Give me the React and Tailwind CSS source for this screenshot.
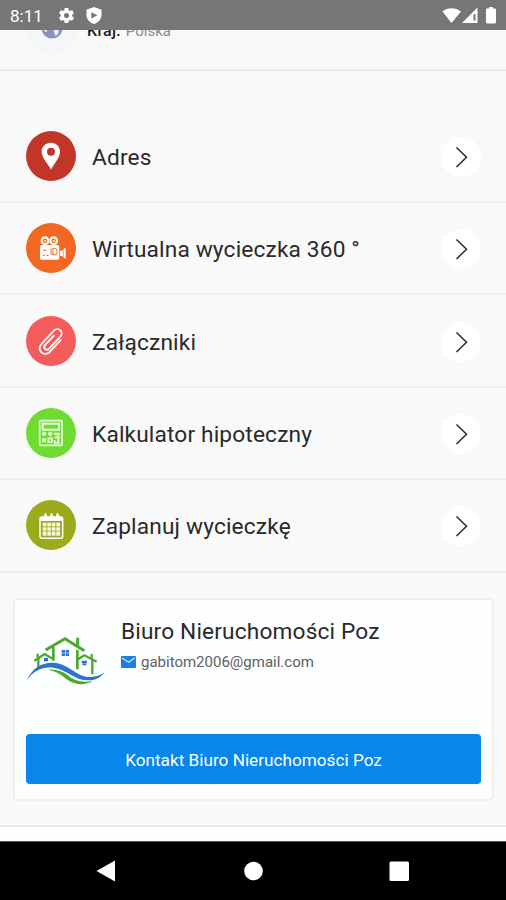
import React from 'react';

// --- ICONS ---
const PinIcon = () => (
  <svg viewBox="0 0 150 150" className="w-full h-full">
    <path fill="#fff" fillRule="evenodd" d="M75 35C58 35 47 47 47 62C47 80 64 94 75 116C86 94 102 80 102 62C102 47 91 35 75 35ZM75 50A12 12 0 1 1 75 74A12 12 0 1 1 75 50Z" />
  </svg>
);

const CameraIcon = () => (
  <svg viewBox="0 0 150 150" className="w-full h-full" fill="none" stroke="#fff">
    <circle cx="57" cy="53" r="10" strokeWidth="6.5" />
    <circle cx="83" cy="53" r="10" strokeWidth="6.5" />
    <circle cx="57" cy="53" r="3" fill="#fff" stroke="none" />
    <circle cx="83" cy="53" r="3" fill="#fff" stroke="none" />
    <rect x="42" y="66" width="58" height="44" rx="5" fill="#fff" stroke="none" />
    <path d="M100 83L109 83L119 73V108L109 99H100Z" fill="#fff" stroke="none" />
    <g stroke="#f26722" strokeWidth="3">
      <rect x="75" y="77" width="18" height="18" rx="4" />
      <path d="M81 80V93M51 82H62M50 97H57M61 97H68" />
      <path d="M101 80V100M112 82V100" strokeWidth="2" />
    </g>
  </svg>
);

const ClipIcon = () => (
  <svg viewBox="0 0 150 150" className="w-full h-full" fill="none" stroke="#fff" strokeWidth="5.5" strokeLinecap="round" strokeLinejoin="round">
    <path transform="translate(75 77) rotate(43)" d="M18 -24V26A17 17 0 0 1 -16 26V-31A13 13 0 0 1 10 -31V20A8 8 0 0 1 -6 20V-19" />
  </svg>
);

const CalculatorIcon = () => (
  <svg viewBox="0 0 150 150" className="w-full h-full" fill="none" stroke="#e8ffe0" strokeWidth="4">
    <rect x="41" y="38" width="67" height="74" rx="3" strokeWidth="5" />
    <rect x="50" y="47" width="49" height="18" strokeWidth="6" />
    <path d="M48 77H61M54.500 71V84M66 77H79M72.500 71V84M84 77H101" strokeWidth="6" />
    <path d="M49 91L60 102M60 91L49 102" strokeWidth="5" />
    <rect x="67" y="91" width="11" height="11" strokeWidth="5" />
    <path d="M86 88H101M97 78V105M86 96V105H101" strokeWidth="5" />
  </svg>
);

const CalendarIcon = () => (
  <svg viewBox="0 0 150 150" className="w-full h-full" fill="none" stroke="#fff">
    <rect x="42" y="51" width="68" height="64" rx="6" strokeWidth="4.5" />
    <path d="M42 51H110V63H42Z" fill="#fff" stroke="none" />
    <path d="M54 56L58 39L64 51L67 56M72 56L76 39L82 51L85 56M90 56L94 39L100 51L102 56" fill="#fff" strokeWidth="3" strokeLinejoin="round" />
    <rect x="50" y="68" width="52" height="39" fill="#f7fadf" stroke="none" />
    <path d="M50 80.500H102M50 93.500H102M62.500 68V107M76 68V107M89.500 68V107" stroke="#9aa51c" strokeWidth="2.500" />
  </svg>
);

const ChevronIcon = () => (
  <svg viewBox="0 0 40 40" className="w-10 h-10" fill="none" stroke="#2a2a2a" strokeWidth="1.5">
    <path d="M15.500 10.500L25.500 20.300L15.500 30" />
  </svg>
);

const HousesLogo = () => (
  <svg viewBox="0 0 270 225" className="w-[90px] h-[75px]" fill="none">
    <g stroke="#4aaa2c" strokeWidth="7">
      <path d="M77 87L135 53L193 89" strokeWidth="9" />
      <path d="M173 76V50" strokeWidth="9" />
      <path d="M100 78V119M172 86V145" strokeWidth="8" />
      <path d="M43 119L74 99L98 113" />
      <path d="M55 110V138M53 98V109" />
      <path d="M174 115L193 103L230 122" />
      <path d="M217 115V160M215 99V111" />
    </g>
    <g fill="#2a75cf">
      <path d="M125 87h10v8h-10zM137 87h10v8h-10zM125 97h10v8h-10zM137 97h10v8h-10z" />
      <path d="M72 111h12v10h-12zM185 119h16v7h-16zM187 127h12v6h-12z" />
      <path d="M20 179C36 142 63 124 100 125C145 126 169 169 211 168C228 168 240 163 254 154C240 171 224 179 205 178C163 178 141 145 99 140C65 136 39 150 20 179Z" />
    </g>
    <path fill="#4aaa2c" d="M85 146C119 144 135 156 153 170C173 183 198 184 218 180C197 193 169 192 148 180C129 167 115 152 85 146Z" />
  </svg>
);

const rows = [
  { label: 'Adres', icon: PinIcon, color: 'bg-[#c23527]' },
  { label: 'Wirtualna wycieczka 360 °', icon: CameraIcon, color: 'bg-[#f26722]' },
  { label: 'Załączniki', icon: ClipIcon, color: 'bg-[#f45b5b]' },
  { label: 'Kalkulator hipoteczny', icon: CalculatorIcon, color: 'bg-[#70dc32]' },
  { label: 'Zaplanuj wycieczkę', icon: CalendarIcon, color: 'bg-[#9cab1b]' },
];

function StatusBar() {
  return (
    <header className="h-[30px] shrink-0 bg-[#767676] flex items-center justify-between pl-[10px] pr-2 text-white">
      <div className="flex items-center">
        <span className="w-[47px] text-[17px] leading-[30px] pt-px">8:11</span>
        <svg viewBox="0 0 24 24" className="w-[19px] h-[19px]" fill="#fff">
          <path d="M19.140 12.940c.040-.3.060-.610.060-.940s-.020-.640-.070-.940l2.030-1.580a.5.5 0 0 0 .120-.610l-1.920-3.320a.5.5 0 0 0-.590-.220l-2.390.960a7 7 0 0 0-1.620-.940l-.360-2.540a.5.5 0 0 0-.480-.410h-3.840a.5.5 0 0 0-.470.410l-.360 2.540a7 7 0 0 0-1.620.940l-2.390-.960a.5.5 0 0 0-.590.220L2.740 8.870a.5.5 0 0 0 .120.610l2.030 1.580a6 6 0 0 0 0 1.880l-2.030 1.580a.5.5 0 0 0-.120.610l1.920 3.320c.120.220.370.290.590.220l2.390-.960c.5.380 1.030.7 1.620.940l.360 2.540c.050.240.240.410.480.410h3.840c.240 0 .440-.170.470-.410l.360-2.540a7 7 0 0 0 1.620-.940l2.390.960c.220.080.470 0 .590-.220l1.920-3.320a.5.5 0 0 0-.120-.610zM12 15.200a3.200 3.200 0 1 1 0-6.400 3.200 3.200 0 0 1 0 6.400z" />
        </svg>
        <svg viewBox="0 0 16 17" className="w-4 h-[17px] ml-[10px]">
          <path d="M8 0L15.500 2.700V8C15.500 12.500 12 15.700 8 17C4 15.700 .5 12.500 .5 8V2.700Z" fill="#fff" />
          <path d="M5.300 5.200L11.500 8.300L5.300 11.500Z" fill="#767676" />
        </svg>
      </div>
      <svg viewBox="0 0 56 18" className="w-14 h-[18px]">
        <path d="M.5 5.500C5 1 14 1 19 5.500L9.500 17Z" fill="#fff" />
        <path d="M35.500 1.500V17H20Z" fill="#fff" />
        <path d="M32.500 8V14.500" stroke="#767676" strokeWidth="2" />
        <path d="M47 1h4v1.500h2q1 0 1 1V16q0 1.500-1.500 1.500h-7Q44 17.500 44 16V3.500q0-1 1-1h2z" fill="#fff" />
      </svg>
    </header>
  );
}

function MenuRow({ label, icon: Icon, color }) {
  return (
    <button className="w-full h-[92.400px] shrink-0 flex items-center pl-[26px] pr-[25px] border-b-2 border-[#edeff0] text-left">
      <span className={`w-[50px] h-[50px] rounded-full shrink-0 ${color}`}>
        <Icon />
      </span>
      <span className="ml-4 flex-1 text-[22.700px] leading-7 tracking-[0.150px] text-[#2a2a2a] pt-1">{label}</span>
      <span className="w-10 h-10 mt-0.5 rounded-full bg-white shrink-0">
        <ChevronIcon />
      </span>
    </button>
  );
}

export default function App() {
  return (
    <div className="w-full h-[900px] overflow-hidden flex flex-col bg-[#f9f9f9] font-['Roboto',sans-serif]">
      <StatusBar />

      {/* country row, scrolled under the status bar */}
      <section className="h-[41px] shrink-0 overflow-hidden border-b-2 border-[#e9eaeb]">
        <div className="flex items-center h-[54px] -mt-[29px] pl-[25px]">
          <span className="w-[54px] h-[54px] rounded-full bg-[#f5f6f7] flex items-center justify-center">
            <svg viewBox="0 0 22 22" className="w-[22px] h-[22px]">
              <circle cx="11" cy="11" r="10.500" fill="#8b91bf" />
              <path d="M12 10L18 12L17 17L14.500 19L13 15ZM2 8L6 12L6 15L3 14Z" fill="#eef0f8" />
            </svg>
          </span>
          <span className="ml-2 text-[16px] font-medium text-[#1c1c1c] tracking-[0.300px] leading-5 pt-[5px]">Kraj:</span>
          <span className="ml-[5px] text-[15px] text-[#8c8c8c] leading-5 pt-[5px]">Polska</span>
        </div>
      </section>

      <nav className="pt-[39.700px] shrink-0 flex flex-col">
        {rows.map(row => (
          <MenuRow key={row.label} {...row} />
        ))}
      </nav>

      {/* agency card */}
      <section className="ml-[13px] mr-[12px] mt-[25px] h-[203px] shrink-0 rounded-[5px] border-2 border-[#edf0f2] bg-[#fcfeff] px-[11px] flex flex-col">
        <div className="flex h-[134px]">
          <div className="-ml-[6px] mt-[21px]">
            <HousesLogo />
          </div>
          <div className="ml-[11px] pt-[17px]">
            <h2 className="text-[22.700px] leading-[30px] text-[#2a2a2a] tracking-[0.150px]">Biuro Nieruchomości Poz</h2>
            <p className="flex items-center mt-[5px] text-[15px] leading-5 text-[#606060]">
              <svg viewBox="0 0 15 12" className="w-[15px] h-3 mr-[5px]">
                <rect width="15" height="12" rx="1" fill="#1b7fe0" />
                <path d="M1.200 2L7.500 6.300L13.800 2" fill="none" stroke="#cfe6ff" strokeWidth="1.300" />
              </svg>
              gabitom2006@gmail.com
            </p>
          </div>
        </div>
        <button className="h-[50px] shrink-0 rounded-[4px] bg-[#0886ec] text-white text-[17.200px] leading-[50px] pt-px">Kontakt Biuro Nieruchomości Poz</button>
      </section>

      <div className="mt-[24.300px] flex-1 border-t-2 border-[#e4ebef] bg-[#fcfeff]" />

      <footer className="h-[59px] shrink-0 bg-black border-t border-[#555]">
        <svg viewBox="0 0 506 58" className="w-full h-[58px]" fill="#fff">
          <path d="M96.500 29L115 18.500V39.500Z" />
          <circle cx="253.500" cy="29" r="9.300" />
          <rect x="389.500" y="19.500" width="19.500" height="19.500" rx="1.500" />
        </svg>
      </footer>
    </div>
  );
}
